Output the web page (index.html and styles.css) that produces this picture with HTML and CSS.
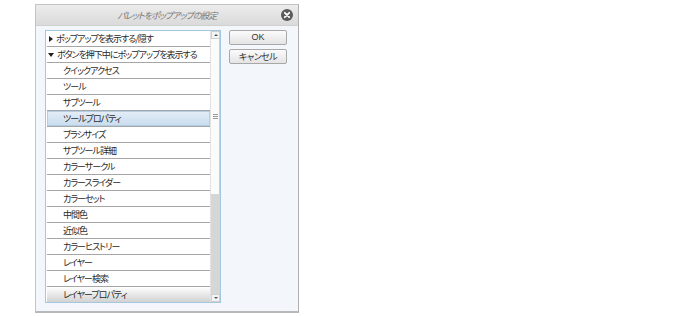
FILE: index.html
```html
<html>
    <head>
        <title>パレットをポップアップの設定</title>
        <link rel="stylesheet" href="styles.css">
    </head>
    <body>
        <div class="dialog">
            <div class="titlebar">
                <span class="title">パレットをポップアップの設定</span>
                <span class="close">
                    <svg width="12" height="12" viewBox="0 0 12 12">
                        <circle cx="6" cy="6" r="6" fill="#5a5a5a"/>
                        <path d="M3.8 3.8 L8.2 8.2 M8.2 3.8 L3.8 8.2" stroke="#fff" stroke-width="1.8" stroke-linecap="round"/>
                    </svg>
                </span>
            </div>
            <div class="content">
                <div class="listbox">
                    <div class="rows">
                        <div class="row top"><span class="arrow right"></span>ポップアップを表示する/隠す</div>
                        <div class="row top"><span class="arrow down"></span>ボタンを押下中にポップアップを表示する</div>
                        <div class="row child">クイックアクセス</div>
                        <div class="row child">ツール</div>
                        <div class="row child">サブツール</div>
                        <div class="row child selected">ツールプロパティ</div>
                        <div class="row child">ブラシサイズ</div>
                        <div class="row child">サブツール詳細</div>
                        <div class="row child">カラーサークル</div>
                        <div class="row child">カラースライダー</div>
                        <div class="row child">カラーセット</div>
                        <div class="row child">中間色</div>
                        <div class="row child">近似色</div>
                        <div class="row child">カラーヒストリー</div>
                        <div class="row child">レイヤー</div>
                        <div class="row child">レイヤー検索</div>
                        <div class="row child last">レイヤープロパティ</div>
                    </div>
                    <div class="scrollbar">
                        <div class="sb-btn"><span class="sb-arrow up"></span></div>
                        <div class="sb-thumb"><span class="grip"></span></div>
                        <div class="sb-track"></div>
                        <div class="sb-btn"><span class="sb-arrow dn"></span></div>
                    </div>
                </div>
                <div class="buttons">
                    <div class="btn ok">OK</div>
                    <div class="btn">キャンセル</div>
                </div>
            </div>
        </div>
    </body>
</html>
```

FILE: styles.css
```css
body {
    margin: 0;
    background: #fff;
    font-family: "Noto Sans CJK JP", "Liberation Sans", sans-serif;
    font-feature-settings: "palt";
}
.dialog {
    width: 262px;
    margin: 4px 0 0 35px;
    border: 1px solid #c4c4c4;
    border-right-color: #b0b0b0;
    border-bottom: 2px solid #b8b8b8;
    background: #f3f7fb;
}
.titlebar {
    height: 20px;
    display: flex;
    align-items: center;
    justify-content: center;
    position: relative;
    background: linear-gradient(#ececec, #dadada);
    border-bottom: 1px solid #d0d0d0;
}
.title {
    font-size: 9px;
    color: #777;
    font-style: oblique;
    letter-spacing: -1px;
}
.close {
    position: absolute;
    right: 5px;
    top: 4px;
    height: 12px;
}
.content {
    display: flex;
    padding: 4px 9px 8px 9px;
}
.listbox {
    width: 174px;
    height: 271px;
    border: 1px solid #a4c6df;
    background: #fff;
    display: flex;
}
.rows {
    flex: 1;
    overflow: hidden;
    padding-left: 1px;
}
.row {
    height: 15px;
    border-bottom: 1px solid #a6a6a6;
    font-size: 9px;
    letter-spacing: -1px;
    color: #2a2a2a;
    white-space: nowrap;
    display: flex;
    align-items: center;
}
.row.top {
    padding-left: 2px;
}
.row.child {
    padding-left: 16px;
}
.row.selected {
    background: linear-gradient(#e4eef8, #c9dcee);
    box-shadow: inset 0 0 0 1px #b4cde3;
}
.row.last {
    background: linear-gradient(#fff, #d2d2d2);
    border-bottom: none;
}
.arrow {
    width: 0;
    height: 0;
    margin-right: 3px;
}
.arrow.right {
    border-top: 3px solid transparent;
    border-bottom: 3px solid transparent;
    border-left: 4px solid #222;
}
.arrow.down {
    border-left: 3px solid transparent;
    border-right: 3px solid transparent;
    border-top: 4px solid #222;
    margin-left: -1px;
}
.scrollbar {
    width: 9px;
    display: flex;
    flex-direction: column;
    border-left: 1px solid #e2e2e2;
}
.sb-btn {
    height: 8px;
    display: flex;
    align-items: center;
    justify-content: center;
    background: #f4f4f4;
    border: 1px solid #cfcfcf;
    box-sizing: border-box;
}
.sb-arrow {
    width: 0;
    height: 0;
    border-left: 2px solid transparent;
    border-right: 2px solid transparent;
}
.sb-arrow.up {
    border-bottom: 2px solid #555;
}
.sb-arrow.dn {
    border-top: 2px solid #555;
}
.sb-thumb {
    height: 155px;
    background: #fbfbfb;
    border-right: 1px solid #b9d3e6;
    display: flex;
    align-items: center;
    justify-content: center;
}
.grip {
    width: 5px;
    height: 5px;
    background: repeating-linear-gradient(#9a9a9a 0 1px, transparent 1px 2px);
}
.sb-track {
    flex: 1;
    background: #d6d6d6;
}
.buttons {
    display: flex;
    flex-direction: column;
    gap: 4px;
    margin-left: 8px;
}
.btn {
    width: 56px;
    height: 13px;
    line-height: 13px;
    text-align: center;
    font-size: 9px;
    letter-spacing: -0.5px;
    color: #333;
    border: 1px solid #a8a8a8;
    border-radius: 2px;
    background: linear-gradient(#fbfbfb, #e4e4e4);
}
.btn.ok {
    font-family: "Liberation Sans", sans-serif;
    letter-spacing: 0;
}
```
